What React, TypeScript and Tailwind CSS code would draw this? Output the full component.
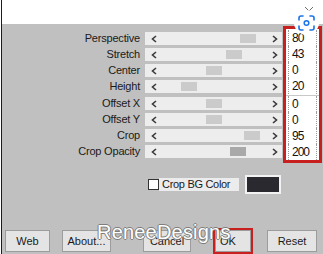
import type { ReactNode } from 'react';

const rows = [
    { label: 'Perspective', thumb: 95, dark: false },
    { label: 'Stretch', thumb: 81, dark: false },
    { label: 'Center', thumb: 61, dark: false },
    { label: 'Height', thumb: 36, dark: false },
    { label: 'Offset X', thumb: 61, dark: false },
    { label: 'Offset Y', thumb: 61, dark: false },
    { label: 'Crop', thumb: 99, dark: false },
    { label: 'Crop Opacity', thumb: 85, dark: true },
];

const values = [
    ['80', '43', '0', '20'],
    ['0', '0', '95', '200'],
];

const Chevron = ({ dir }: { dir: 'left' | 'right' }) => (
    <svg width="6" height="8" viewBox="0 0 6 8">
        <polyline
            points={dir === 'left' ? '5,1 1.5,4 5,7' : '1,1 4.5,4 1,7'}
            fill="none"
            stroke="#3a3a3a"
            strokeWidth="1.6"
        />
    </svg>
);

const Slider = ({ thumb, dark }: { thumb: number; dark: boolean }) => (
    <div className="relative ml-[5px] w-[137px] h-[13px] bg-[#ededed] flex items-center justify-between pl-[6px] pr-[4px]">
        <Chevron dir="left" />
        {/* thumb */}
        <div
            className={dark ? 'absolute top-[2px] w-[16px] h-[9px] bg-[#a9a9a9]' : 'absolute top-[2px] w-[16px] h-[9px] bg-[#cbcbcb]'}
            style={{ left: thumb }}
        />
        <Chevron dir="right" />
    </div>
);

const Button = ({ children, className }: { children: ReactNode; className: string }) => (
    <div className={`h-[22px] bg-[#e4e4e4] border border-[#9c9c9c] flex items-center justify-center text-[11px] text-[#1a1a1a] ${className}`}>
        {children}
    </div>
);

export default function App() {
    return (
        <div
            className="relative w-[323px] h-[254px] bg-white overflow-hidden flex"
            style={{ fontFamily: '"Liberation Sans", Arial, sans-serif' }}
        >
            <div className="w-[1px] bg-white" />
            <div className="w-[1px] bg-[#1c1c1c]" />

            <div className="flex-1 flex flex-col">
                {/* white title area */}
                <div className="h-[27px] bg-white" />

                {/* gray panel */}
                <div className="flex-1 bg-[#c0c0c0] flex flex-col">
                    <div className="flex pt-[2px]">
                        {/* labels + sliders */}
                        <div className="w-[281px] pt-[6px] flex flex-col">
                            {rows.map((r, i) => (
                                <div
                                    key={r.label}
                                    className={i === 4 ? 'flex items-center h-[13px] mt-[4px]' : i === 0 ? 'flex items-center h-[13px]' : 'flex items-center h-[13px] mt-[3px]'}
                                >
                                    <div className="w-[138px] text-right text-[11px] tracking-[-0.2px] text-[#1a1a1a] leading-[13px]">
                                        {r.label}
                                    </div>
                                    <Slider thumb={r.thumb} dark={r.dark} />
                                </div>
                            ))}
                        </div>

                        {/* value boxes */}
                        <div className="w-[39px] h-[137px] border-[3px] border-[#c8201e] bg-white flex flex-col pt-[1px]">
                            {values.map((group, g) => (
                                <div key={g} className={g === 1 ? 'flex flex-col mt-[1px] border-t border-[#c8c8c8]' : 'flex flex-col'}>
                                    {group.map((v, i) => (
                                        <div
                                            key={i}
                                            className="h-[16px] mx-[2px] border-x border-[#9a9a9a] border-dotted flex items-center pl-[3px] text-[12px] tracking-[-1px] text-[#111] leading-[16px]"
                                        >
                                            {v}
                                        </div>
                                    ))}
                                </div>
                            ))}
                        </div>
                    </div>

                    {/* Crop BG color */}
                    <div className="flex items-center h-[19px] mt-[12px] ml-[146px]">
                        <div className="w-[11px] h-[11px] bg-white border border-[#333]" />
                        <div className="w-[80px] h-[13px] bg-[#ececec] flex items-center pl-[3px] text-[11px] tracking-[-0.3px] text-[#1a1a1a]">
                            Crop BG Color
                        </div>
                        <div className="ml-[6px] w-[36px] h-[19px] border-2 border-[#f2f2f2] bg-[#29292f]" />
                    </div>

                    {/* buttons */}
                    <div className="flex items-start mt-[36px] ml-[3px]">
                        <Button className="w-[45px]">Web</Button>
                        <Button className="w-[49px] ml-[12px]">About...</Button>
                        <Button className="w-[48px] ml-[32px]">Cancel</Button>
                        <div className="ml-[22px] -mt-[2px] w-[40px] border-2 border-[#c8201e]">
                            <div className="h-[22px] bg-[#e4e4e4] border border-[#9c9c9c] flex items-center pl-[4px] text-[11px] text-[#1a1a1a]">
                                OK
                            </div>
                        </div>
                        <Button className="w-[50px] ml-[14px]">Reset</Button>
                    </div>
                </div>
            </div>

            {/* watermark */}
            <div className="absolute left-[97px] top-[222px] text-[20px] leading-[20px] text-white tracking-[0.2px] [text-shadow:1px_0_0_#7d7d7d,-1px_0_0_#7d7d7d,0_1px_0_#7d7d7d,0_-1px_0_#7d7d7d]">
                ReneeDesigns
            </div>

            {/* close cross */}
            <svg className="absolute left-[304px] top-[6px]" width="10" height="10" viewBox="0 0 10 10">
                <path d="M1 1 L9 9 M9 1 L1 9" stroke="#6f6f6f" strokeWidth="1" />
            </svg>

            {/* lens button */}
            <div className="absolute left-[294px] top-[10px] w-[25px] h-[25px] rounded-full bg-white flex items-center justify-center">
                <svg width="17" height="16" viewBox="0 0 17 16">
                    <path
                        d="M1 5 V3 Q1 1 3 1 H5 M12 1 H14 Q16 1 16 3 V5 M16 11 V13 Q16 15 14 15 H12 M5 15 H3 Q1 15 1 13 V11"
                        fill="none"
                        stroke="#1a73e8"
                        strokeWidth="1.6"
                        strokeLinecap="round"
                    />
                    <circle cx="8.5" cy="8" r="2.3" fill="none" stroke="#1a73e8" strokeWidth="1.5" />
                </svg>
            </div>
        </div>
    );
}
